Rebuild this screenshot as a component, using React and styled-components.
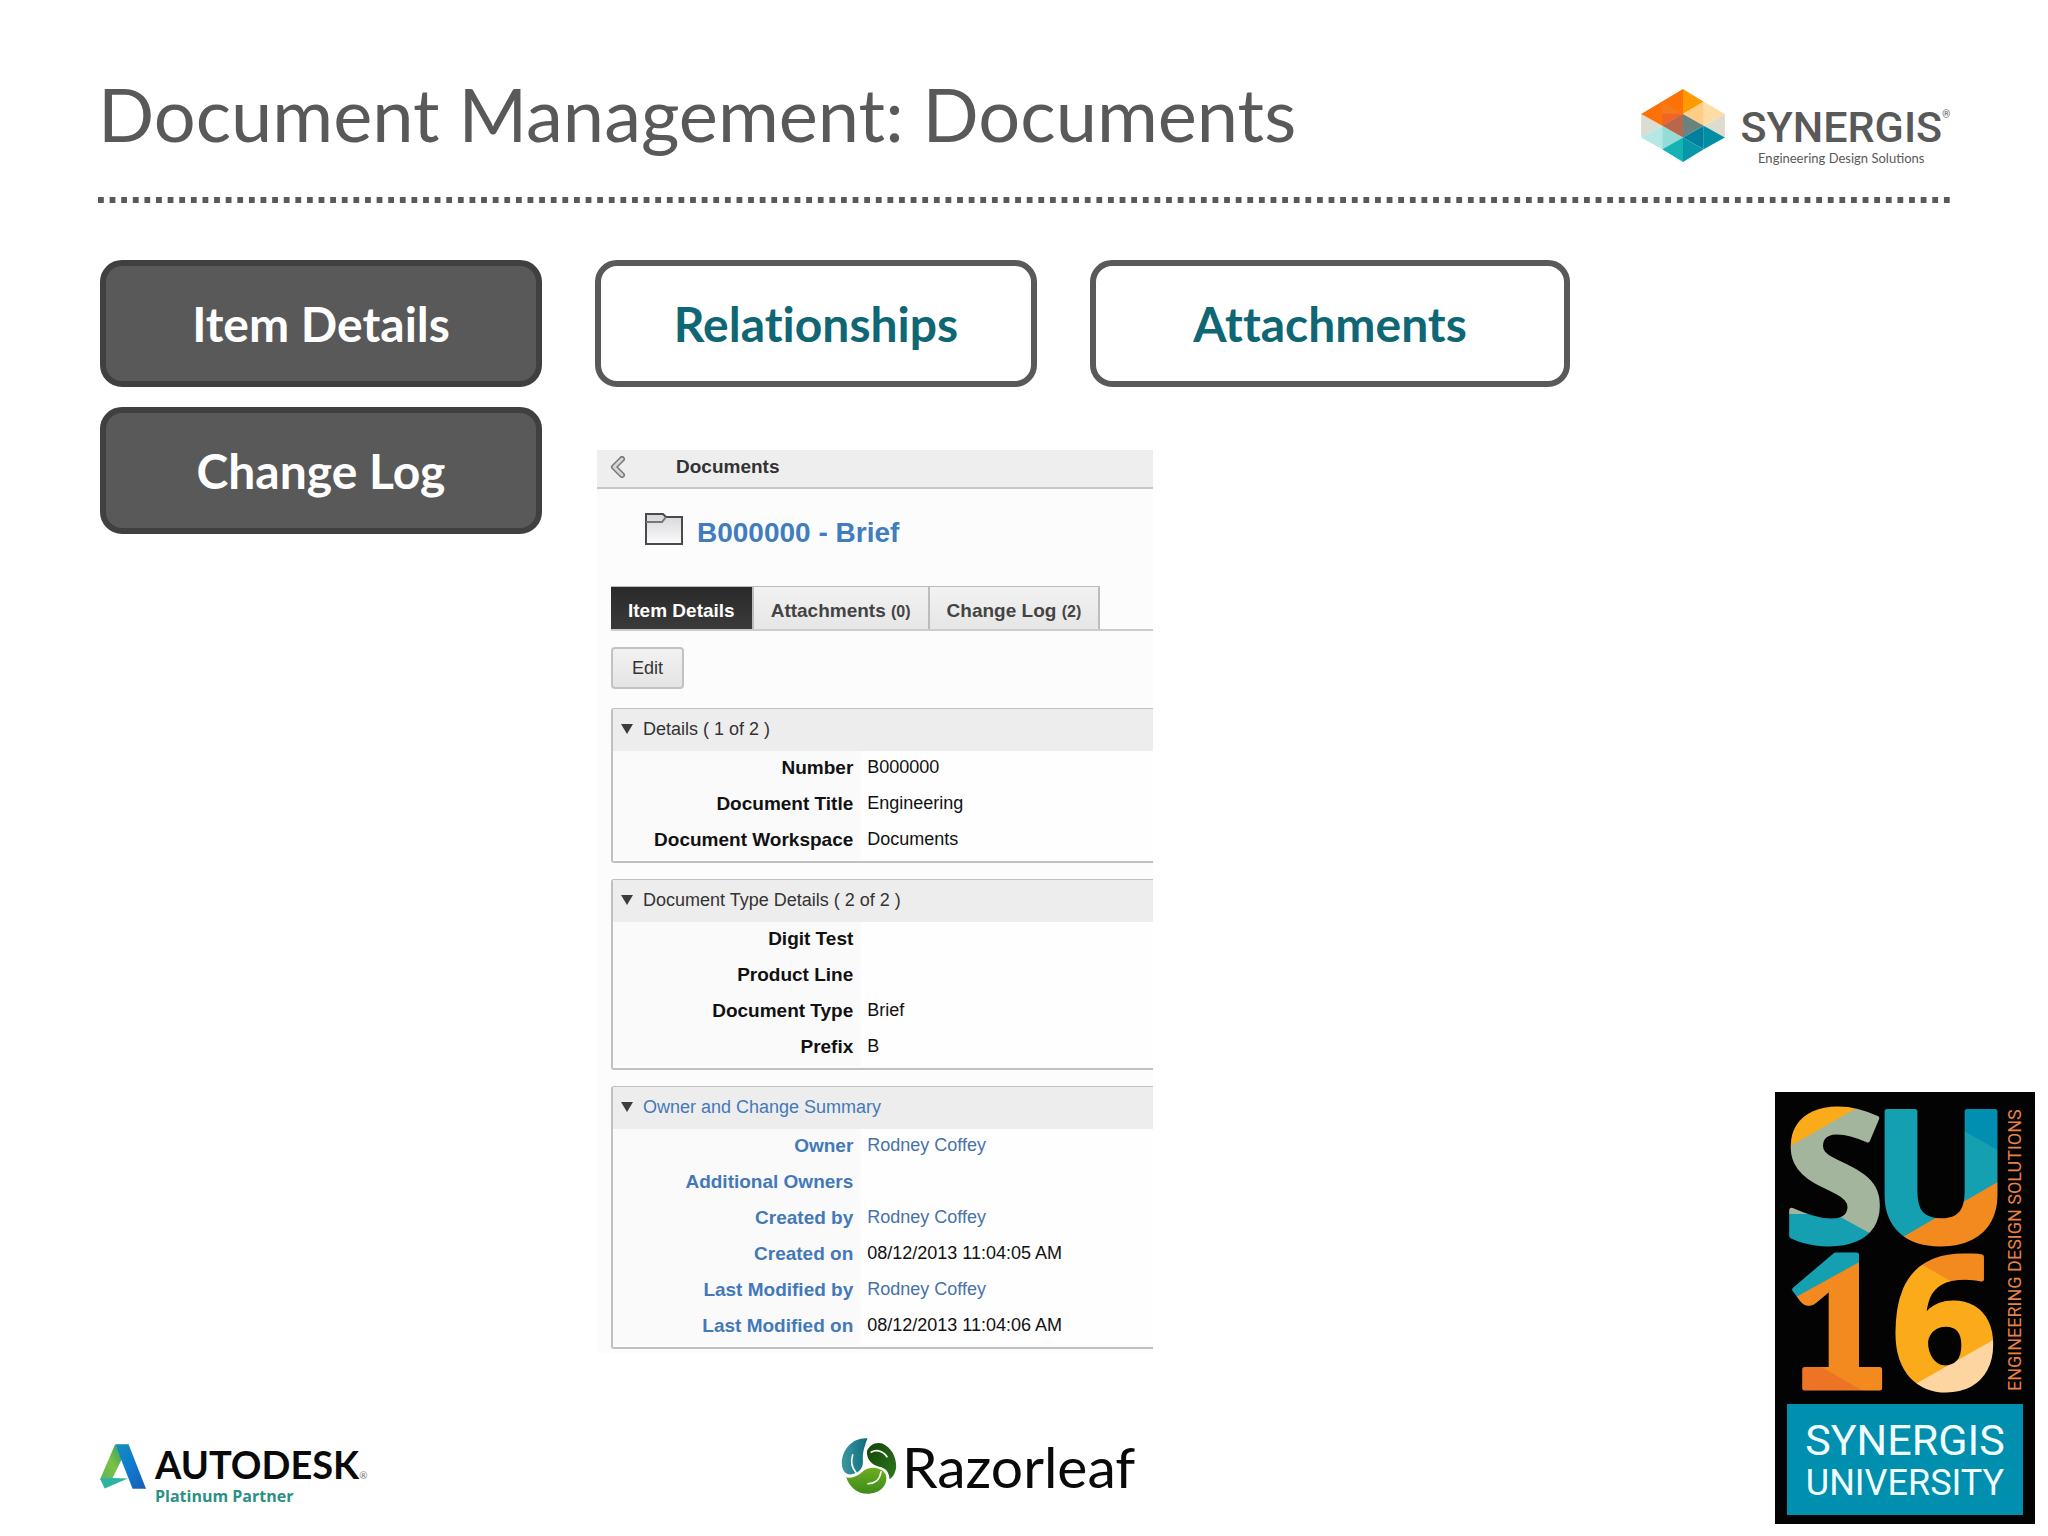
import styled, { createGlobalStyle } from "styled-components";

const GlobalStyle = createGlobalStyle`
  * {
    box-sizing: border-box;
  }
  body {
    margin: 0;
    background: #ffffff;
    font-family: "Liberation Sans", Arial, sans-serif;
  }
`;

const Page = styled.div`
  display: flex;
  flex-direction: column;
  min-height: 100vh;
`;

const Header = styled.header`
  display: flex;
  flex-direction: column;
  gap: 31px;
  padding: 65px 98px 0;
`;

const HeaderRow = styled.div`
  display: flex;
  justify-content: space-between;
  align-items: flex-end;
`;

const Title = styled.h1`
  margin: 0;
  padding-bottom: 3px;
  color: #595959;
  font: 400 74px/98px Lato, sans-serif;
`;

const DottedRule = styled.div`
  height: 6px;
  background: linear-gradient(to right, #595959 50%, transparent 50%) 0 0 /
    calc(100% / 159.5) 6px;
`;

const SynergisLogo = styled.div`
  display: flex;
  align-items: flex-start;
  gap: 15px;
`;

const SynergisText = styled.div`
  display: flex;
  flex-direction: column;
  align-items: center;
  padding-top: 15px;
  color: #595959;
`;

const SynergisName = styled.span`
  font: 500 43px/46px Roboto, sans-serif;

  sup {
    font-size: 10px;
    line-height: 10px;
    vertical-align: 24px;
  }
`;

const Tagline = styled.span`
  padding-right: 8px;
  font: 400 13px/16px Lato, sans-serif;
`;

const Lower = styled.div`
  display: grid;
  grid-template-columns: 1fr 260px;
  flex: 1;
  padding-right: 13px;
`;

const Content = styled.div`
  display: flex;
  flex-direction: column;
  justify-content: space-between;
  padding: 57px 0 28px 100px;
`;

const Main = styled.main`
  display: grid;
  grid-template-columns: 442fr 975fr;
  gap: 53px;
  padding-right: 205px;
`;

const SideColumn = styled.div`
  display: flex;
  flex-direction: column;
  gap: 20px;
`;

const MainColumn = styled.div`
  display: flex;
  flex-direction: column;
  gap: 63px;
`;

const TopicRow = styled.div`
  display: grid;
  grid-template-columns: 442fr 480fr;
  gap: 53px;
`;

const TopicButton = styled.button`
  height: 127px;
  padding: 0;
  border: 6px solid ${(props) => (props.$active ? "#404040" : "#595959")};
  border-radius: 22px;
  background: ${(props) => (props.$active ? "#595959" : "#ffffff")};
  color: ${(props) => (props.$active ? "#ffffff" : "#0f6674")};
  font: 700 48px/56px Lato, sans-serif;
  font-variant-ligatures: none;
`;

const Panel = styled.section`
  width: 57%;
  margin-left: 2px;
  background: #fcfcfd;
`;

const PanelBar = styled.div`
  display: flex;
  align-items: center;
  gap: 50px;
  height: 39px;
  padding: 0 13px 3px;
  border-bottom: 2px solid #c6c6c6;
  background: #efeeee;
  color: #333333;
  font-size: 19px;
  font-weight: 700;
`;

const BackButton = styled.button`
  display: flex;
  padding: 0;
  border: 0;
  background: none;
`;

const PanelBody = styled.div`
  display: flex;
  flex-direction: column;
  padding: 18px 0 4px 14px;
`;

const RecordHead = styled.div`
  display: flex;
  align-items: center;
  gap: 14px;
  margin: 0 0 35px 34px;
`;

const RecordTitle = styled.h2`
  margin: 0;
  padding-top: 8px;
  color: #3f7dbf;
  font-size: 28px;
  line-height: 36px;
`;

const Tabs = styled.div`
  display: flex;
  border-bottom: 2px solid #cccccc;
`;

const Tab = styled.button`
  height: 43px;
  padding: 6px 17px 0;
  border: 1px solid #bcbcbc;
  border-width: 1px 2px 0 0;
  background: ${(props) =>
    props.$active
      ? "linear-gradient(#2a2a2a, #3a3a3a)"
      : "linear-gradient(#f2f2f2, #e6e6e6)"};
  color: ${(props) => (props.$active ? "#ffffff" : "#444444")};
  font: 700 19px/24px "Liberation Sans", Arial, sans-serif;

  small {
    font-size: 16px;
  }
`;

const EditButton = styled.button`
  align-self: flex-start;
  height: 42px;
  margin: 16px 0 19px;
  padding: 0 19px;
  border: 2px solid #c2c2c2;
  border-radius: 4px;
  background: linear-gradient(#f2f2f2, #e4e4e4);
  color: #333333;
  font: 400 18px/24px "Liberation Sans", Arial, sans-serif;
`;

const Sections = styled.div`
  display: flex;
  flex-direction: column;
  gap: 16px;
`;

const Section = styled.section`
  padding-bottom: 2px;
  border: solid #c0c0c4;
  border-width: 1px 0 2px 2px;
  border-radius: 3px 0 0 3px;
`;

const SectionHead = styled.h3`
  display: flex;
  align-items: center;
  gap: 10px;
  height: 42px;
  margin: 0;
  padding: 0 8px 2px;
  background: #eeedee;
  color: ${(props) => (props.$linked ? "#4379b8" : "#333333")};
  font-size: 18px;
  font-weight: 400;
`;

const Fields = styled.dl`
  display: grid;
  grid-template-columns: 46% 1fr;
  margin: 0;
  line-height: 33px;
`;

const Label = styled.dt`
  height: 36px;
  padding-right: 8px;
  background: #fafafb;
  color: ${(props) => (props.$linked ? "#4379b8" : "#111111")};
  font-size: 19px;
  font-weight: 700;
  text-align: right;
`;

const Value = styled.dd`
  margin: 0;
  padding-left: 6px;
  background: #fefefe;
  color: #111111;
  font-size: 18px;
`;

const PersonLink = styled.a`
  color: #4672a8;
  text-decoration: none;
`;

const Footer = styled.footer`
  display: grid;
  grid-template-columns: 741fr 934fr;
  align-items: end;
`;

const Autodesk = styled.div`
  display: flex;
  gap: 9px;
`;

const AutodeskText = styled.div`
  display: flex;
  flex-direction: column;
`;

const AutodeskName = styled.span`
  color: #0a0a0a;
  font: 700 38px/40px Lato, sans-serif;

  sup {
    color: #777777;
    font-size: 10px;
    font-weight: 400;
    line-height: 10px;
    vertical-align: 0;
  }
`;

const AutodeskLevel = styled.span`
  color: #2b9085;
  font: 700 16px/24px "Open Sans", sans-serif;
`;

const Razorleaf = styled.div`
  display: flex;
  align-items: center;
  gap: 5px;
  padding-bottom: 14px;
  color: #0a0a0a;
  font: 400 57px/52px Lato, sans-serif;
`;

const Badge = styled.aside`
  display: flex;
  flex-direction: column;
  align-self: end;
  justify-content: space-between;
  height: 432px;
  margin-bottom: 12px;
  padding: 10px 12px 9px;
  background: #030303;
`;

const BadgeTop = styled.div`
  display: flex;
  justify-content: space-between;

  svg {
    overflow: visible;
  }
`;

const BadgeSide = styled.span`
  color: #e88245;
  font: 400 18px/16px Roboto, sans-serif;
  text-align: center;
  writing-mode: vertical-rl;
  transform: rotate(180deg);
`;

const BadgePlate = styled.div`
  display: flex;
  flex-direction: column;
  align-items: center;
  justify-content: center;
  height: 111px;
  padding-top: 4px;
  background: #008fae;
  color: #f2fdff;
`;

const PlateLine = styled.span`
  font: 400 ${(props) => props.$size}px/43px Roboto, sans-serif;
`;

const Gem = () => (
  <svg width="84" height="73" viewBox="20 15 250 218" aria-hidden="true">
    <path d="M20 90L83 125L20 160Z" fill="#d9ddd3" />
    <path d="M20 160L83 125V195Z" fill="#b4e8e4" />
    <path d="M83 125L145 160L83 195Z" fill="#93dcd8" />
    <path d="M145 15L20 90L83 125L145 90Z" fill="#fc7206" />
    <path d="M83 53V125L145 90Z" fill="#f47a1c" />
    <path d="M145 15L207 53L145 90Z" fill="#ff9a00" />
    <path d="M83 125L145 90V160Z" fill="#b7684a" />
    <path d="M83 88V125L145 90Z" fill="#ee6526" />
    <path d="M145 90L207 53V125Z" fill="#ffcd85" />
    <path d="M207 53L270 90L207 125Z" fill="#ffdca4" />
    <path d="M270 90V160L207 125Z" fill="#e0dccd" />
    <path d="M145 90L207 125L145 160Z" fill="#69837f" />
    <path d="M145 160L207 125V195Z" fill="#007f9f" />
    <path d="M207 125L270 160L207 195Z" fill="#008ea4" />
    <path d="M145 160L207 195L145 233Z" fill="#0797a9" />
    <path d="M83 195L145 160V233Z" fill="#15b3b3" />
  </svg>
);

const BackIcon = () => (
  <svg width="16" height="22" viewBox="0 0 16 22" aria-hidden="true">
    <g fill="none" strokeLinecap="round" strokeLinejoin="round">
      <path d="M12 3L4 11L12 19" stroke="#777777" strokeWidth="6" />
      <path d="M12 3L4 11L12 19" stroke="#d6d6d6" strokeWidth="3" />
    </g>
  </svg>
);

const FolderIcon = () => (
  <svg width="38" height="33" viewBox="0 0 38 33" aria-hidden="true">
    <defs>
      <linearGradient id="folder" x1="0" y1="0" x2="0" y2="1">
        <stop offset="0" stopColor="#d6d6da" />
        <stop offset="1" stopColor="#fbfbfd" />
      </linearGradient>
    </defs>
    <path d="M1 1H18L21 4H37V31H1Z" fill="url(#folder)" stroke="#4a4a4a" strokeWidth="2" />
    <path d="M1 9H17L21 4" fill="none" stroke="#777777" strokeWidth="2" />
  </svg>
);

const Caret = () => (
  <svg width="12" height="10" viewBox="0 0 12 10" aria-hidden="true">
    <path d="M0 0H12L6 10Z" fill="#3c3c3c" />
  </svg>
);

const AutodeskMark = () => (
  <svg width="46" height="45" viewBox="15 15 137 133" aria-hidden="true">
    <defs>
      <linearGradient id="adGreen" x1="1" y1="0" x2="0" y2="1">
        <stop offset="0" stopColor="#2f9a78" />
        <stop offset="0.5" stopColor="#7cc242" />
        <stop offset="1" stopColor="#57b560" />
      </linearGradient>
      <linearGradient id="adBlue" x1="0" y1="0" x2="1" y2="1">
        <stop offset="0" stopColor="#168fb4" />
        <stop offset="0.5" stopColor="#0f7bd0" />
        <stop offset="1" stopColor="#1a5bb0" />
      </linearGradient>
    </defs>
    <path d="M60 15L80 60L50 120H15Z" fill="url(#adGreen)" />
    <path d="M15 118L50 116L98 117L29 147Z" fill="#2bb3a4" />
    <path d="M60 15H100L152 148H112Z" fill="url(#adBlue)" />
  </svg>
);

const RazorleafMark = () => (
  <svg width="56" height="56" viewBox="14 11 167 170" aria-hidden="true">
    <defs>
      <linearGradient id="leafTeal" x1="0" y1="0" x2="1" y2="0">
        <stop offset="0" stopColor="#3f97a3" />
        <stop offset="1" stopColor="#0c6e7c" />
      </linearGradient>
      <linearGradient id="leafDark" x1="0" y1="0" x2="1" y2="1">
        <stop offset="0" stopColor="#12420a" />
        <stop offset="1" stopColor="#2f7a1c" />
      </linearGradient>
      <linearGradient id="leafLime" x1="0" y1="0" x2="0" y2="1">
        <stop offset="0" stopColor="#6fae1e" />
        <stop offset="1" stopColor="#3b8a1a" />
      </linearGradient>
    </defs>
    <path d="M93 12C50 8 15 45 15 88C15 106 24 122 40 122C64 120 80 106 79 82C78 58 80 48 93 12Z" fill="url(#leafTeal)" />
    <path d="M91 52C98 32 118 22 138 28C164 40 180 66 180 98C178 116 172 128 160 136C158 112 148 102 128 98C106 92 91 78 91 52Z" fill="url(#leafDark)" />
    <path d="M28 130C50 136 66 124 82 110C100 96 136 98 148 122C156 146 140 168 118 176C78 190 42 170 28 130Z" fill="url(#leafLime)" />
    <g fill="none" stroke="#f4fbf2" strokeWidth="5" strokeLinecap="round">
      <path d="M48 62C42 82 46 102 58 116" />
      <path d="M104 54C122 44 142 52 152 68" />
      <path d="M94 150C112 150 130 140 134 114" />
    </g>
  </svg>
);

const BadgeArt = () => (
  <svg width="212" height="296" viewBox="0 0 212 296">
    <defs>
      <pattern id="badgeFill" width="240" height="320" patternUnits="userSpaceOnUse">
        <rect width="97" height="147" fill="#a3b59c" />
        <path d="M0 0H80L0 46Z" fill="#fbaa19" />
        <path d="M0 112H48L97 139V147H0Z" fill="#14a0b0" />
        <rect x="97" width="143" height="147" fill="#14a0b0" />
        <path d="M172 0H240V65L172 26Z" fill="#008fb0" />
        <path d="M97 146L240 63V147H97Z" fill="#f28a20" />
        <rect y="147" width="100" height="173" fill="#f28a20" />
        <path d="M0 147H96L0 200Z" fill="#14a0b0" />
        <path d="M0 245L88 296H0Z" fill="#ee7425" />
        <rect x="100" y="147" width="140" height="173" fill="#fbaa19" />
        <path d="M108 147H240V184H172Z" fill="#f28a20" />
        <path d="M100 298L240 219V320H100Z" fill="#fdd5a0" />
      </pattern>
    </defs>
    <g
      fill="url(#badgeFill)"
      stroke="url(#badgeFill)"
      strokeWidth="5"
      strokeLinejoin="round"
      fontFamily="Open Sans, sans-serif"
      fontWeight="700"
      fontSize="184"
      textAnchor="middle"
    >
      <text x="47" y="140">S</text>
      <text x="154" y="140">U</text>
      <text x="50" y="286" fontFamily="Lato, sans-serif" fontWeight="900">
        1
      </text>
      <text x="157" y="286">6</text>
    </g>
  </svg>
);

const tabs = [
  { name: "Item Details", active: true },
  { name: "Attachments", count: 0 },
  { name: "Change Log", count: 2 },
];

const sections = [
  {
    title: "Details ( 1 of 2 )",
    fields: [
      { label: "Number", value: "B000000" },
      { label: "Document Title", value: "Engineering" },
      { label: "Document Workspace", value: "Documents" },
    ],
  },
  {
    title: "Document Type Details ( 2 of 2 )",
    fields: [
      { label: "Digit Test" },
      { label: "Product Line" },
      { label: "Document Type", value: "Brief" },
      { label: "Prefix", value: "B" },
    ],
  },
  {
    title: "Owner and Change Summary",
    linked: true,
    fields: [
      { label: "Owner", person: "Rodney Coffey" },
      { label: "Additional Owners" },
      { label: "Created by", person: "Rodney Coffey" },
      { label: "Created on", value: "08/12/2013 11:04:05 AM" },
      { label: "Last Modified by", person: "Rodney Coffey" },
      { label: "Last Modified on", value: "08/12/2013 11:04:06 AM" },
    ],
  },
];

const Field = ({ field, linked }) => (
  <>
    <Label $linked={linked}>{field.label}</Label>
    <Value>
      {field.person ? <PersonLink href="#">{field.person}</PersonLink> : field.value}
    </Value>
  </>
);

const DocumentPanel = () => (
  <Panel>
    <PanelBar>
      <BackButton aria-label="Back">
        <BackIcon />
      </BackButton>
      Documents
    </PanelBar>
    <PanelBody>
      <RecordHead>
        <FolderIcon />
        <RecordTitle>B000000 - Brief</RecordTitle>
      </RecordHead>
      <Tabs>
        {tabs.map((tab) => (
          <Tab key={tab.name} $active={tab.active}>
            {tab.name}
            {tab.count !== undefined && (
              <>
                {" "}
                <small>({tab.count})</small>
              </>
            )}
          </Tab>
        ))}
      </Tabs>
      <EditButton>Edit</EditButton>
      <Sections>
        {sections.map((section) => (
          <Section key={section.title}>
            <SectionHead $linked={section.linked}>
              <Caret />
              {section.title}
            </SectionHead>
            <Fields>
              {section.fields.map((field) => (
                <Field key={field.label} field={field} linked={section.linked} />
              ))}
            </Fields>
          </Section>
        ))}
      </Sections>
    </PanelBody>
  </Panel>
);

const App = () => {
  return (
    <>
      <GlobalStyle />
      <Page>
        <Header>
          <HeaderRow>
            <Title>Document Management: Documents</Title>
            <SynergisLogo>
              <Gem />
              <SynergisText>
                <SynergisName>
                  SYNERGIS<sup>®</sup>
                </SynergisName>
                <Tagline>Engineering Design Solutions</Tagline>
              </SynergisText>
            </SynergisLogo>
          </HeaderRow>
          <DottedRule />
        </Header>
        <Lower>
          <Content>
            <Main>
              <SideColumn>
                <TopicButton $active>Item Details</TopicButton>
                <TopicButton $active>Change Log</TopicButton>
              </SideColumn>
              <MainColumn>
                <TopicRow>
                  <TopicButton>Relationships</TopicButton>
                  <TopicButton>Attachments</TopicButton>
                </TopicRow>
                <DocumentPanel />
              </MainColumn>
            </Main>
            <Footer>
              <Autodesk>
                <AutodeskMark />
                <AutodeskText>
                  <AutodeskName>
                    AUTODESK<sup>®</sup>
                  </AutodeskName>
                  <AutodeskLevel>Platinum Partner</AutodeskLevel>
                </AutodeskText>
              </Autodesk>
              <Razorleaf>
                <RazorleafMark />
                Razorleaf
              </Razorleaf>
            </Footer>
          </Content>
          <Badge>
            <BadgeTop>
              <BadgeArt />
              <BadgeSide>ENGINEERING DESIGN SOLUTIONS</BadgeSide>
            </BadgeTop>
            <BadgePlate>
              <PlateLine $size={43}>SYNERGIS</PlateLine>
              <PlateLine $size={36}>UNIVERSITY</PlateLine>
            </BadgePlate>
          </Badge>
        </Lower>
      </Page>
    </>
  );
};

export default App;
